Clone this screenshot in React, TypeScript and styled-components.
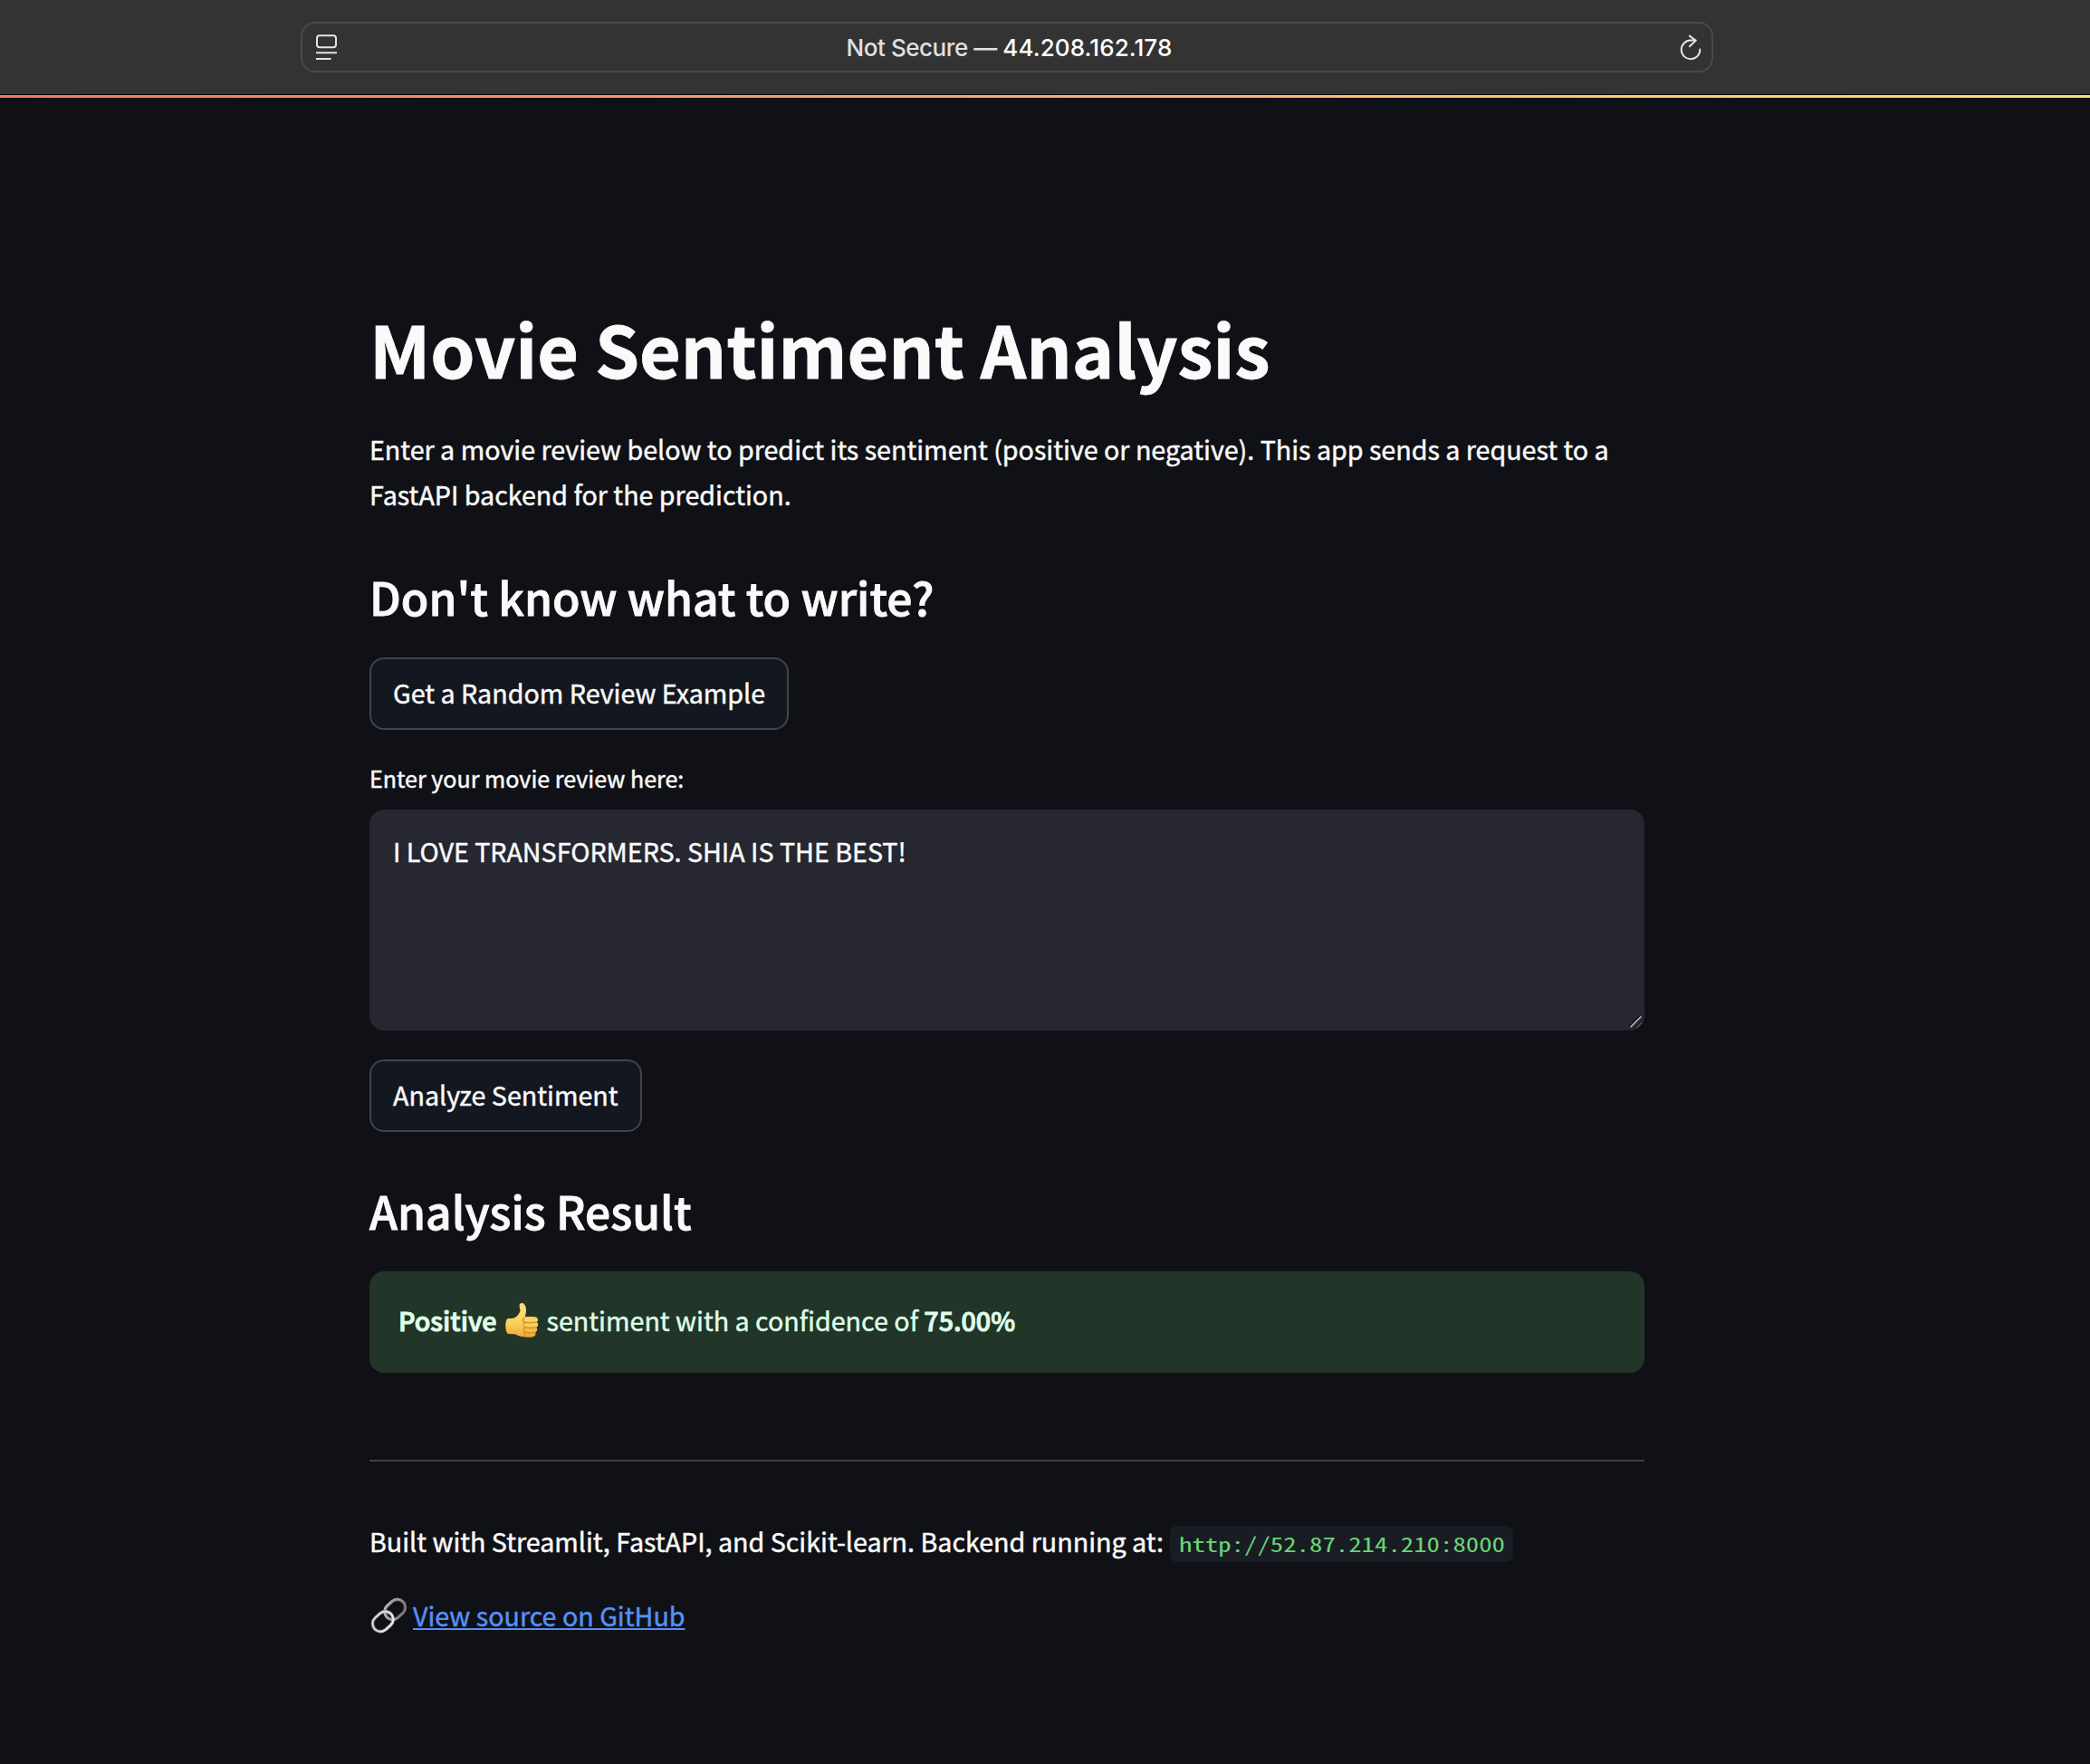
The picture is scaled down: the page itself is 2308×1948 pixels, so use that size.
import React from "react";
import styled, { createGlobalStyle } from "styled-components";

const SANS = '"Noto Sans CJK SC", "Noto Sans", sans-serif';
const MONO = '"Noto Sans Mono CJK SC", "Liberation Mono", monospace';

const GlobalStyle = createGlobalStyle`
  * { box-sizing: border-box; }
  body {
    margin: 0;
    background: #101116;
    color: #fafafa;
    font-family: ${SANS};
    font-size: 28.65px;
    -webkit-text-stroke: 0.45px currentColor;
  }
`;

const Page = styled.div`
  min-height: 1948px;
  display: flex;
  flex-direction: column;
`;

const Toolbar = styled.header`
  height: 105px;
  padding: 24px 0 0 332px;
  background: #333333;
  border-bottom: 1px solid #000;
`;

const AddressBar = styled.div`
  width: 1560px;
  height: 56px;
  padding: 0 10px 0 15px;
  display: flex;
  align-items: center;
  justify-content: space-between;
  border: 2px solid #4a4a4a;
  border-radius: 16px;
`;

const Address = styled.div`
  padding: 1px 0 0 2px;
  font-family: Inter, "Liberation Sans", sans-serif;
  font-size: 26px;
  font-weight: 500;
  line-height: 32px;
  white-space: pre;
  color: #e0e0e0;
  letter-spacing: -0.45px;
  -webkit-text-stroke: 0;
`;

const Host = styled.span`
  color: #fff;
  letter-spacing: 0.1px;
`;

const Decoration = styled.div`
  height: 3px;
  background: linear-gradient(90deg, #f27a5e 0%, #fba468 43%, #fbcd72 80%, #f5e07a 100%);
`;

const Main = styled.main`
  width: 1408px;
  margin: 229px 0 0 408px;
  display: flex;
  flex-direction: column;
  align-items: flex-start;
`;

const Title = styled.h1`
  margin: 0;
  font-size: 78.8px;
  font-weight: 700;
  line-height: 94px;
  -webkit-text-stroke: 0.8px currentColor;
`;

const Paragraph = styled.p<{ $top: number }>`
  margin: ${(p) => p.$top}px 0 0;
  line-height: 50px;
`;

const Heading = styled.h2<{ $top: number }>`
  margin: ${(p) => p.$top}px 0 0;
  font-size: 49.8px;
  font-weight: 500;
  line-height: 60px;
  -webkit-text-stroke: 0.9px currentColor;
`;

const Button = styled.button<{ $top: number }>`
  height: 80px;
  margin: ${(p) => p.$top}px 0 0;
  padding: 0 24px 3px;
  border: 2px solid #42444b;
  border-radius: 16px;
  background: #131720;
  color: inherit;
  font: inherit;
  -webkit-text-stroke: inherit;
`;

const Label = styled.label`
  margin: 38px 0 20px;
  font-size: 25.07px;
  line-height: 30px;
`;

const Field = styled.div`
  position: relative;
  width: 100%;
  height: 244px;
  padding: 26px 26px;
  border-radius: 16px;
  background: #262730;
  line-height: 40px;
`;

const Grip = styled.svg`
  position: absolute;
  right: 0;
  bottom: 0;
`;

const Alert = styled.div`
  width: 100%;
  height: 112px;
  margin-top: 38px;
  padding: 0 32px 5px;
  display: flex;
  align-items: center;
  border-radius: 16px;
  background: #213528;
  color: #dffde9;
  white-space: pre;
`;

const Strong = styled.strong`
  font-weight: 500;
  -webkit-text-stroke: 1px currentColor;
`;

const Thumb = styled.svg`
  flex: none;
  margin: 0 9px 0 9px;
`;

const Divider = styled.hr`
  width: 100%;
  height: 2px;
  margin: 96px 0 0;
  border: 0;
  background: #404146;
`;

const Footer = styled.div`
  margin-top: 63px;
  height: 50px;
  display: flex;
  align-items: center;
  gap: 7px;
  line-height: 50px;
  white-space: nowrap;
`;

const Code = styled.code`
  width: 379px;
  height: 40px;
  margin-top: 5px;
  padding-left: 9.6px;
  border-radius: 8px;
  background: #1a1c24;
  color: #68d674;
  font-family: ${MONO};
  font-size: 22px;
  line-height: 39px;
  -webkit-text-stroke: 0;
`;

const CodeText = styled.span`
  display: inline-block;
  transform: scaleX(1.309);
  transform-origin: 0 50%;
`;

const SourceRow = styled.div`
  height: 50px;
  margin-top: 32px;
  display: flex;
  align-items: center;
  gap: 6px;
  padding-left: 1px;
  line-height: 50px;
`;

const Link = styled.a`
  color: #5591f5;
  text-decoration: underline;
  text-decoration-thickness: 2px;
  text-underline-offset: 2px;
`;

const ReaderIcon = () => (
  <svg width="24" height="30" viewBox="0 0 24 30" fill="none" stroke="#e4e4e4" strokeWidth="2">
    <rect x="1" y="2.3" width="21" height="13" rx="3" />
    <path d="M0 21.2H23M0 28H16.5" />
  </svg>
);

const ReloadIcon = () => (
  <svg width="26" height="30" viewBox="0 0 26 30" fill="none" stroke="#e4e4e4" strokeWidth="2" strokeLinecap="round" strokeLinejoin="round">
    <path d="M23.3 17.4A10.3 10.3 0 1 1 13 7.6H18.6" />
    <path d="M11.8 2.6L18.6 7.8L11.8 14.2" />
  </svg>
);

const ThumbsUp = () => (
  <Thumb width="37" height="40" viewBox="0 0 37 40">
    <defs>
      <linearGradient id="skin" x1="0" y1="0" x2="0" y2="1">
        <stop offset="0" stopColor="#fbe07a" />
        <stop offset="0.6" stopColor="#fbd05a" />
        <stop offset="1" stopColor="#eda838" />
      </linearGradient>
    </defs>
    <path
      fill="url(#skin)"
      d="M2 18.5C4 17.3 7 18.4 9.5 17.6C12.5 16.6 15.8 12.5 16.4 9.5C16.7 7.6 15.2 4.6 15.7 2.8C16.2 .9 18.6 .4 20.2 1.6C22.6 3.4 23.3 7.6 22.9 11C22.7 13 22 14.6 21.8 16.2C25 15.9 29.5 15.9 33 16.2C36.6 16.6 37 20.8 34.6 22C37 23.2 36.6 27 34.3 27.9C36 29.3 35.4 32.6 33 33.3C34.2 35.2 33 37.8 30.6 38.2C26.5 39 20.5 39 16 37.6C13.2 36.7 12 35.4 9.4 35.2C6.8 35 4 35.8 2.2 34.6C-.2 31 -.4 21.5 2 18.5Z"
    />
    <path
      d="M20.6 17.2C18.8 18.8 19.3 21.4 21.4 22.2C19.4 23.6 19.6 26.6 21.6 27.8C20 29.2 20.2 32 22 33.2C21 34.6 21.2 36.8 22.4 38M21.4 22.2C25 22.9 31 22.8 34.6 22M21.6 27.8C25 28.5 31 28.6 34.3 27.9M22 33.2C25 33.9 30 34 33 33.3"
      fill="none"
      stroke="#cf8a28"
      strokeWidth="1.2"
      strokeLinecap="round"
    />
  </Thumb>
);

const ChainIcon = () => (
  <svg width="41" height="40" viewBox="0 0 41 42" fill="none">
    <defs>
      <linearGradient id="steel" x1="0" y1="0" x2="1" y2="1">
        <stop offset="0" stopColor="#a9b4bd" />
        <stop offset="0.5" stopColor="#8a8583" />
        <stop offset="1" stopColor="#574c4b" />
      </linearGradient>
      <linearGradient id="chrome" x1="0" y1="0" x2="1" y2="1">
        <stop offset="0" stopColor="#8a8a8c" />
        <stop offset="0.5" stopColor="#a6a6a8" />
        <stop offset="1" stopColor="#d0d0d2" />
      </linearGradient>
    </defs>
    <g transform="rotate(-42 27.5 14)">
      <rect x="14.6" y="4.8" width="25.8" height="18.4" rx="9.2" stroke="url(#steel)" strokeWidth="3.6" />
      <rect x="14.2" y="4.2" width="26.4" height="19.4" rx="9.6" stroke="#d6dde4" strokeWidth="0.8" strokeOpacity="0.6" />
    </g>
    <g transform="rotate(-42 13.5 28)">
      <rect x="0.6" y="18.8" width="25.8" height="18.4" rx="9.2" stroke="url(#chrome)" strokeWidth="3.6" />
      <rect x="0.6" y="18.8" width="25.8" height="18.4" rx="9.2" stroke="#f4f4f6" strokeWidth="1.3" />
    </g>
  </svg>
);

export default function App() {
  return (
    <Page>
      <GlobalStyle />
      <Toolbar>
        <AddressBar>
          <ReaderIcon />
          <Address>
            Not Secure — <Host>44.208.162.178</Host>
          </Address>
          <ReloadIcon />
        </AddressBar>
      </Toolbar>
      <Decoration />
      <Main>
        <Title>Movie Sentiment Analysis</Title>
        <Paragraph $top={40}>
          Enter a movie review below to predict its sentiment (positive or negative). This app sends a request to a
          FastAPI backend for the prediction.
        </Paragraph>
        <Heading $top={57}>Don't know what to write?</Heading>
        <Button $top={38}>Get a Random Review Example</Button>
        <Label>Enter your movie review here:</Label>
        <Field>
          I LOVE TRANSFORMERS. SHIA IS THE BEST!
          <Grip width="18" height="18" viewBox="0 0 18 18">
            <path d="M1.2 13.6L13.6 1.2" stroke="#08080a" strokeWidth="1.6" />
            <path d="M2.4 14.4L14.4 2.4" stroke="#b4b4b4" strokeWidth="1.6" />
            <path d="M8.4 14L13.8 8.6" stroke="#15151a" strokeWidth="1.3" />
            <path d="M9.4 14.8L14.8 9.4" stroke="#5c5c62" strokeWidth="1.3" />
          </Grip>
        </Field>
        <Button $top={32}>Analyze Sentiment</Button>
        <Heading $top={56}>Analysis Result</Heading>
        <Alert>
          <Strong>Positive</Strong>
          <ThumbsUp />
          <span>sentiment with a confidence of </span>
          <Strong>75.00%</Strong>
        </Alert>
        <Divider />
        <Footer>
          <span>Built with Streamlit, FastAPI, and Scikit-learn. Backend running at:</span>
          <Code>
            <CodeText>http://52.87.214.210:8000</CodeText>
          </Code>
        </Footer>
        <SourceRow>
          <ChainIcon />
          <Link>View source on GitHub</Link>
        </SourceRow>
      </Main>
    </Page>
  );
}
